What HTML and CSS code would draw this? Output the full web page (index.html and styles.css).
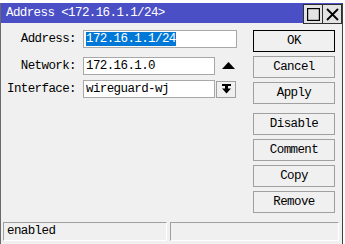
FILE: index.html
```html
<!DOCTYPE html>
<html lang="en">
<head>
  <meta charset="UTF-8" />
  <meta name="viewport" content="width=device-width, initial-scale=1" />
  <title>Address</title>
  <link rel="stylesheet" href="styles.css">
</head>
<body>

  <div class="window">
    <div class="titlebar">
      <span class="title">Address &lt;172.16.1.1/24&gt;</span>
      <div class="title-btns">
        <span class="tbtn">
          <svg width="13" height="13" viewBox="0 0 13 13"><rect x="0.5" y="0.5" width="12" height="12" fill="none" stroke="#000" stroke-width="1.4"/></svg>
        </span>
        <span class="tbtn">
          <svg width="13" height="13" viewBox="0 0 13 13"><path d="M1 1 L12 12 M12 1 L1 12" stroke="#000" stroke-width="1.8"/></svg>
        </span>
      </div>
    </div>

    <div class="content">
      <div class="fields">
        <div class="row first">
          <label>Address:</label>
          <div class="input wide"><span class="sel">172.16.1.1/24</span></div>
        </div>
        <div class="row second">
          <label>Network:</label>
          <div class="input">172.16.1.0</div>
          <span class="arrow-up">
            <svg width="13" height="7" viewBox="0 0 13 7"><polygon points="0,7 13,7 6.5,0" fill="#000"/></svg>
          </span>
        </div>
        <div class="row third">
          <label>Interface:</label>
          <div class="input">wireguard-wj</div>
          <span class="dropdown">
            <svg width="9" height="10" viewBox="0 0 9 10"><rect x="0" y="0" width="9" height="2" fill="#000"/><rect x="3" y="2" width="3" height="3" fill="#000"/><polygon points="0,4.5 9,4.5 4.5,9.5" fill="#000"/></svg>
          </span>
        </div>
      </div>

      <div class="buttons">
        <button class="default">OK</button>
        <button>Cancel</button>
        <button>Apply</button>
        <button class="group">Disable</button>
        <button>Comment</button>
        <button>Copy</button>
        <button>Remove</button>
      </div>
    </div>

    <div class="statusbar">
      <div class="panel left">enabled</div>
      <div class="panel right"></div>
    </div>
  </div>

</body>
</html>
```

FILE: styles.css
```css
body {
  margin: 0;
  background: #fff;
  font-family: "Liberation Mono", "DejaVu Sans Mono", monospace;
  font-size: 12.5px;
  letter-spacing: -0.6px;
  color: #000;
}
.window {
  margin-top: 3px;
  width: 341px;
  height: 241px;
  background: #f0f0f0;
  border-left: 1px solid #6a6a6a;
  border-right: 1px solid #404040;
}
.titlebar {
  display: flex;
  align-items: flex-start;
  justify-content: space-between;
  height: 20px;
  background: #4b4fc6;
}
.title {
  color: #fff;
  padding-left: 5px;
  line-height: 20px;
}
.title-btns {
  display: flex;
  margin-top: 1px;
}
.tbtn {
  display: flex;
  align-items: center;
  justify-content: center;
  width: 18px;
  height: 18px;
  background: #e3e3e3;
  border: 1px solid #303030;
  margin-left: -1px;
}
.content {
  display: flex;
  padding: 7px 0 9px 0;
}
.fields {
  width: 252px;
}
.row {
  display: flex;
  align-items: center;
  height: 18px;
}
.row.second {
  margin-top: 9px;
}
.row.third {
  margin-top: 5px;
}
.row label {
  width: 75px;
  text-align: right;
  margin-right: 7px;
}
.input {
  box-sizing: border-box;
  width: 132px;
  height: 18px;
  line-height: 16px;
  padding-left: 2px;
  background: #fff;
  border: 1px solid #a8a8a8;
  white-space: nowrap;
}
.input.wide {
  width: 154px;
}
.sel {
  background: #0078d7;
  color: #fff;
}
.arrow-up {
  display: flex;
  margin-left: 7px;
  margin-top: -2px;
}
.dropdown {
  box-sizing: border-box;
  display: flex;
  align-items: center;
  justify-content: center;
  width: 20px;
  height: 17px;
  margin-left: 1px;
  border: 1px solid #a0a0a0;
  background: #f0f0f0;
}
.buttons {
  display: flex;
  flex-direction: column;
  gap: 4px;
  width: 82px;
}
button {
  box-sizing: border-box;
  height: 22px;
  padding: 0;
  font-family: inherit;
  font-size: 12.5px;
  letter-spacing: -0.6px;
  color: #000;
  background: #f0f0f0;
  border: 1px solid #a0a0a0;
}
button.default {
  border: 1px solid #000;
}
button.group {
  margin-top: 5px;
}
.statusbar {
  display: flex;
  gap: 3px;
  padding-left: 2px;
}
.panel {
  box-sizing: border-box;
  height: 19px;
  line-height: 17px;
  padding-left: 3px;
  border-top: 1px solid #a0a0a0;
  border-left: 1px solid #a0a0a0;
  border-right: 1px solid #fff;
  border-bottom: 1px solid #fff;
}
.panel.left {
  width: 164px;
}
.panel.right {
  width: 169px;
}
```
